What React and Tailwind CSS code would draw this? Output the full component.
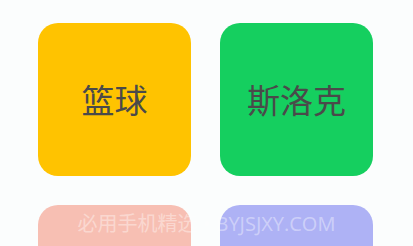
export default function App() {
  const cards = [
    { label: "篮球", bg: "bg-[#ffc300]" },
    { label: "斯洛克", bg: "bg-[#15cf5f]" },
    { label: "", bg: "bg-[#f7bfb3]" },
    { label: "", bg: "bg-[#aeb2f5]" },
  ];
  return (
    <div
      className="relative w-[413px] h-[246px] overflow-hidden bg-[#fbfdfd]"
      style={{ fontFamily: '"Noto Sans CJK SC", "Noto Sans", sans-serif' }}
    >
      <div className="grid grid-cols-[153px_153px] gap-x-[29px] gap-y-[29px] pl-[38px] pt-[23px]">
        {cards.map((c, i) => (
          <div
            key={i}
            className={`${c.bg} w-[153px] h-[153px] rounded-[20px] flex items-center justify-center`}
          >
            <span className="text-[33px] leading-none text-[#4a4a4a]">{c.label}</span>
          </div>
        ))}
      </div>
      <div
        className="absolute left-0 right-0 top-[211px] text-center text-[20px] leading-[26px] text-white/40 whitespace-nowrap"
        style={{ fontFamily: '"Open Sans", "Noto Sans CJK SC", sans-serif' }}
      >
        必用手机精选 • BYJSJXY.COM
      </div>
    </div>
  );
}
